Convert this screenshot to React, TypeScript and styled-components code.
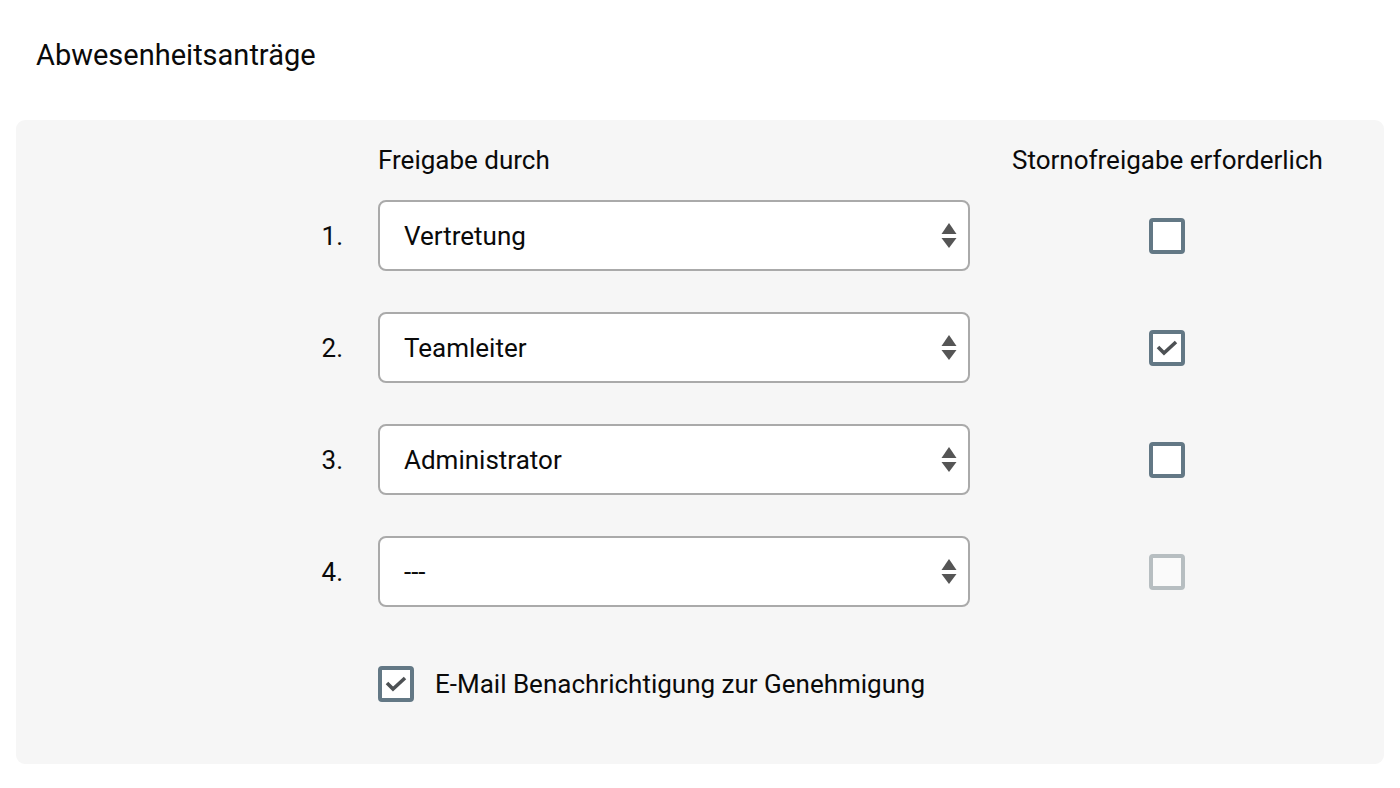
import styled, { createGlobalStyle } from "styled-components";

const GlobalStyle = createGlobalStyle`
  body {
    margin: 0;
    background: #fff;
    font-family: Roboto, "Liberation Sans", sans-serif;
    color: #0a0a0a;
  }
`;

const Page = styled.div`
  padding: 36px 16px 24px 16px;
`;

const Title = styled.h1`
  margin: 0 0 46px 20px;
  font-size: 29px;
  line-height: 38px;
  font-weight: 400;
`;

const Panel = styled.div`
  background: #f6f6f6;
  border-radius: 9px;
  padding: 26px 63px 62px 0;
  display: flex;
  flex-direction: column;
`;

const Row = styled.div<{ $gap?: number }>`
  display: grid;
  grid-template-columns: 1fr 592px 316px;
  column-gap: 35px;
  align-items: center;
  margin-bottom: ${(p) => p.$gap ?? 41}px;
`;

const HeaderCell = styled.div<{ $center?: boolean }>`
  font-size: 26px;
  line-height: 28px;
  padding-left: ${(p) => (p.$center ? 7 : 0)}px;
  text-align: ${(p) => (p.$center ? "center" : "left")};
  white-space: nowrap;
`;

const Number = styled.div`
  font-size: 26px;
  text-align: right;
`;

const SelectBox = styled.div`
  height: 71px;
  box-sizing: border-box;
  border: 2px solid #aaaaaa;
  border-radius: 8px;
  background: #fff;
  display: flex;
  align-items: center;
  justify-content: space-between;
  padding: 0 11px 0 24px;
  font-size: 26px;
`;

const CheckCell = styled.div`
  padding-left: 7px;
  display: flex;
  justify-content: center;
`;

const Box = styled.div<{ $disabled?: boolean }>`
  width: 36px;
  height: 36px;
  box-sizing: border-box;
  border: 4px solid ${(p) => (p.$disabled ? "#b7bec1" : "#637885")};
  border-radius: 4px;
  background: ${(p) => (p.$disabled ? "#fafafa" : "#fff")};
  display: flex;
  align-items: center;
  justify-content: center;
`;

const EmailLabel = styled.label`
  display: flex;
  align-items: center;
  gap: 21px;
  font-size: 26px;
  white-space: nowrap;
`;

const Arrows = () => (
  <svg width="16" height="26" viewBox="0 0 16 26">
    <polygon points="8,0 15.5,11 0.5,11" fill="#555" />
    <polygon points="0.5,15 15.5,15 8,25" fill="#555" />
  </svg>
);

const Check = () => (
  <svg width="24" height="18" viewBox="0 0 24 18">
    <polyline
      points="3,8 9,14 21,3"
      fill="none"
      stroke="#4d5154"
      strokeWidth="3.6"
    />
  </svg>
);

const Checkbox = ({ checked, disabled }: { checked?: boolean; disabled?: boolean }) => (
  <Box $disabled={disabled}>{checked && <Check />}</Box>
);

const rows = [
  { value: "Vertretung", checked: false },
  { value: "Teamleiter", checked: true },
  { value: "Administrator", checked: false },
  { value: "---", checked: false, disabled: true },
];

export default function App() {
  return (
    <>
      <GlobalStyle />
      <Page>
        <Title>Abwesenheitsanträge</Title>
        <Panel>
          <Row $gap={26}>
            <div />
            <HeaderCell>Freigabe durch</HeaderCell>
            <HeaderCell $center>Stornofreigabe erforderlich</HeaderCell>
          </Row>
          {rows.map((r, i) => (
            <Row key={i} $gap={i === rows.length - 1 ? 59 : 41}>
              <Number>{i + 1}.</Number>
              <SelectBox>
                <span>{r.value}</span>
                <Arrows />
              </SelectBox>
              <CheckCell>
                <Checkbox checked={r.checked} disabled={r.disabled} />
              </CheckCell>
            </Row>
          ))}
          <Row $gap={0}>
            <div />
            <EmailLabel>
              <Checkbox checked />
              E-Mail Benachrichtigung zur Genehmigung
            </EmailLabel>
            <div />
          </Row>
        </Panel>
      </Page>
    </>
  );
}
